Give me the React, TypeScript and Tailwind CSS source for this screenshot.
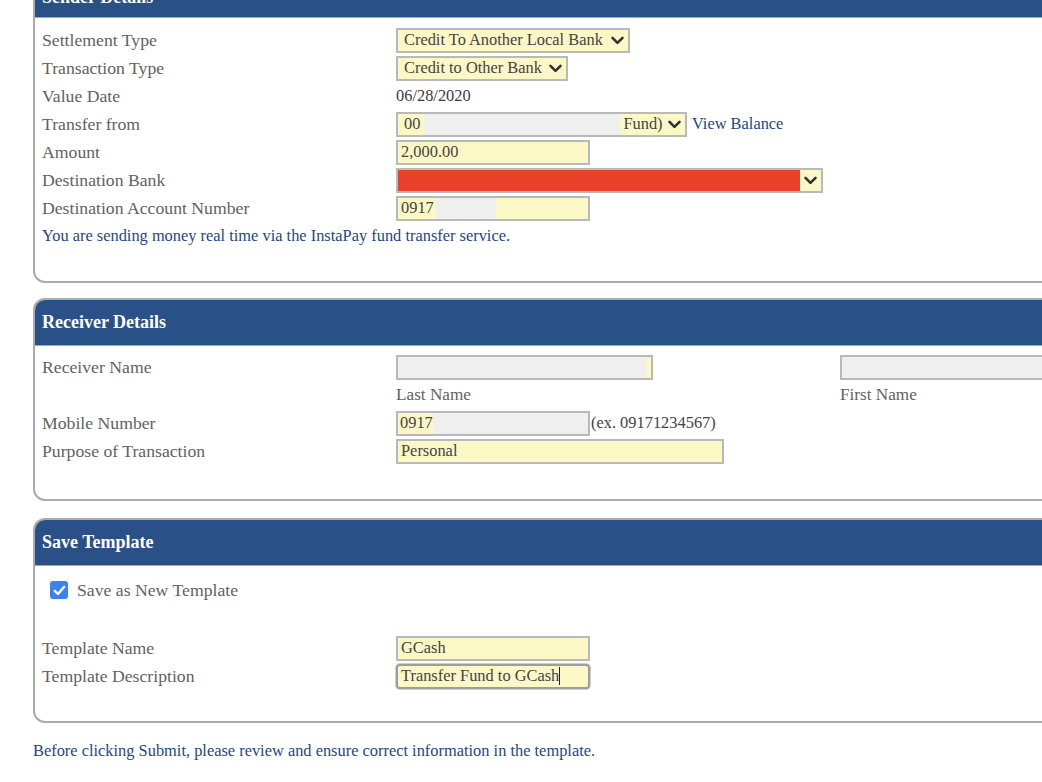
import React from "react";

const serif = { fontFamily: '"Liberation Serif", "Times New Roman", serif' };

function Chevron() {
  return (
    <svg width="13" height="9" viewBox="0 0 13 9" className="shrink-0">
      <polyline points="1.5,1.8 6.5,6.8 11.5,1.8" fill="none" stroke="#333" strokeWidth="2.6" strokeLinecap="round" strokeLinejoin="round" />
    </svg>
  );
}

function Panel({ title, children, className = "", headerClass = "" }: { title: string; children: React.ReactNode; className?: string; headerClass?: string }) {
  return (
    <div className={"w-[1070px] border-2 border-[#ababab] rounded-[12px] overflow-hidden bg-white " + className}>
      <div className={"h-[46px] bg-[#2a5088] flex items-center px-[7px] text-white font-bold text-[18px] border-b border-[#9aa8bd] " + headerClass}>
        {title}
      </div>
      {children}
    </div>
  );
}

function Row({ label, children }: { label: string; children?: React.ReactNode }) {
  return (
    <div className="flex h-[28px] items-center">
      <div className="w-[354px] shrink-0 text-[17.7px] text-[#626262]">{label}</div>
      <div className="flex items-center">{children}</div>
    </div>
  );
}

const box = "h-[25px] border-2 border-[#b9b9b9] bg-[#fcf8c6] flex items-center text-[16.4px] text-[#444]";

export default function App() {
  return (
    <div style={serif} className="w-[1042px] h-[782px] overflow-hidden bg-white">
      <div className="pl-[33px]">
        {/* Sender details */}
        <Panel title="Sender Details" className="-mt-[30px]" headerClass="pt-[6px]">
          <div className="pl-[7px] pt-[8px] pb-[31px]">
            <Row label="Settlement Type">
              <div className={box + " w-[234px] pl-[6px] pr-[4px] justify-between"}>
                <span>Credit To Another Local Bank</span>
                <Chevron />
              </div>
            </Row>
            <Row label="Transaction Type">
              <div className={box + " w-[172px] pl-[6px] pr-[4px] justify-between"}>
                <span>Credit to Other Bank</span>
                <Chevron />
              </div>
            </Row>
            <Row label="Value Date">
              <span className="text-[16.4px] text-[#3c3c3c]">06/28/2020</span>
            </Row>
            <Row label="Transfer from">
              <div className={box + " w-[291px] pl-[6px] pr-[4px]"}>
                <span>00</span>
                <div className="w-[196px] h-full bg-[#efefef] ml-[4px]" />
                <span className="ml-[3px]">Fund)</span>
                <div className="ml-auto"><Chevron /></div>
              </div>
              <span className="ml-[5px] text-[16.4px] text-[#26477e]">View Balance</span>
            </Row>
            <Row label="Amount">
              <div className={box + " w-[194px] pl-[3px]"}>2,000.00</div>
            </Row>
            <Row label="Destination Bank">
              <div className={box + " w-[427px]"}>
                <div className="w-[402px] h-full bg-[#e8412a]" />
                <div className="flex-1 flex justify-center"><Chevron /></div>
              </div>
            </Row>
            <Row label="Destination Account Number">
              <div className={box + " w-[194px] pl-[3px]"}>
                <span>0917</span>
                <div className="w-[60px] h-full bg-[#efefef] ml-[2px]" />
              </div>
            </Row>
            <div className="h-[28px] flex items-center text-[16.4px] text-[#26477e]">
              You are sending money real time via the InstaPay fund transfer service.
            </div>
          </div>
        </Panel>

        {/* Receiver details */}
        <Panel title="Receiver Details" className="mt-[15px]">
          <div className="pl-[7px] pt-[7px] pb-[34px]">
            <div className="flex h-[28px] items-center">
              <div className="w-[354px] shrink-0 text-[17.7px] text-[#626262]">Receiver Name</div>
              <div className={box + " w-[257px] pr-[5px]"}>
                <div className="h-full flex-1 bg-[#efefef]" />
              </div>
              <div className={box + " w-[260px] ml-[187px]"}>
                <div className="h-full flex-1 bg-[#efefef]" />
              </div>
            </div>
            <div className="flex h-[28px] items-center text-[17.2px] text-[#626262]">
              <div className="w-[354px] shrink-0" />
              <div className="w-[444px] shrink-0">Last Name</div>
              <div>First Name</div>
            </div>
            <Row label="Mobile Number">
              <div className={box + " w-[194px] pl-[2px]"}>
                <span>0917</span>
                <div className="h-full flex-1 bg-[#efefef]" />
              </div>
              <span className="ml-[1px] text-[16.4px] text-[#444]">(ex. 09171234567)</span>
            </Row>
            <Row label="Purpose of Transaction">
              <div className={box + " w-[328px] pl-[3px]"}>Personal</div>
            </Row>
          </div>
        </Panel>

        {/* Save template */}
        <Panel title="Save Template" className="mt-[17px]">
          <div className="pl-[7px] pt-[10px] pb-[31px]">
            <div className="flex h-[28px] items-center">
              <div className="ml-[8px] w-[18px] h-[18px] rounded-[3px] bg-[#3b82f6] flex items-center justify-center">
                <svg width="13" height="11" viewBox="0 0 13 11">
                  <polyline points="1.8,5.8 5,9 11.2,1.8" fill="none" stroke="white" strokeWidth="2.4" strokeLinecap="round" strokeLinejoin="round" />
                </svg>
              </div>
              <span className="ml-[9px] text-[17.7px] text-[#626262]">Save as New Template</span>
            </div>
            <div className="h-[30px]" />
            <Row label="Template Name">
              <div className={box + " w-[194px] pl-[3px]"}>GCash</div>
            </Row>
            <Row label="Template Description">
              <div className="h-[25px] w-[194px] border-2 border-[#9d9d9d] rounded-[4px] shadow-[0_0_0_1px_#cfcfcf] bg-[#fcf8c6] flex items-center pl-[3px] text-[16.4px] text-[#444]">
                <span>Transfer Fund to GCash</span>
                <span className="w-[1px] h-[18px] bg-[#222]" />
              </div>
            </Row>
          </div>
        </Panel>

        <div className="mt-[16px] text-[16.4px] text-[#26477e]">
          Before clicking Submit, please review and ensure correct information in the template.
        </div>
      </div>
    </div>
  );
}
